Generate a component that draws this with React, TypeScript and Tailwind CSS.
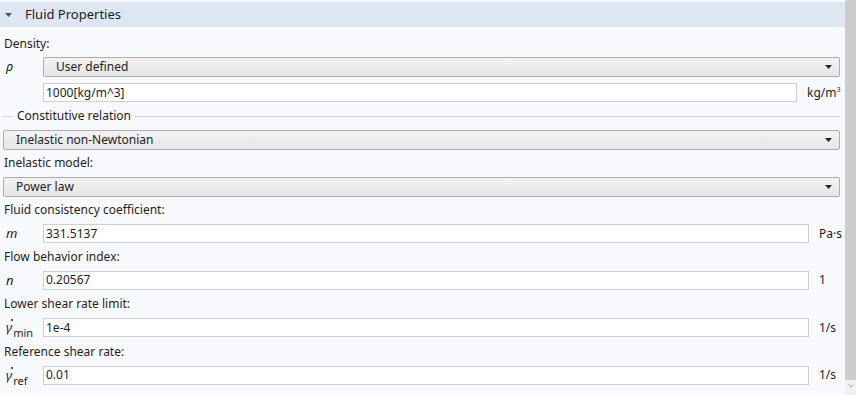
import type { ReactNode } from 'react';

const FONT = { fontFamily: '"Noto Sans", "Open Sans", sans-serif' };

function Caret({ className = '' }: { className?: string }) {
  return (
    <svg width="7" height="4" viewBox="0 0 7 4" className={className}>
      <path d="M0 0H7L3.5 4Z" fill="currentColor" />
    </svg>
  );
}

function Select({ value }: { value: string }) {
  return (
    <div className="flex h-[20px] flex-1 items-center justify-between rounded-[2px] border border-[#adadad] bg-gradient-to-b from-[#f3f3f3] to-[#e6e6e6] pl-[12px] pr-[7px]">
      <span>{value}</span>
      <Caret className="text-[#222]" />
    </div>
  );
}

function Field({ value }: { value: string }) {
  return (
    <div className="flex h-[19px] flex-1 items-center border border-[#cfcfcf] bg-white pl-[2px]">
      {value}
    </div>
  );
}

function Label({ children, className = '' }: { children: ReactNode; className?: string }) {
  return <div className={`flex h-[20px] items-center pl-[4px] ${className}`}>{children}</div>;
}

function Sym({ children }: { children: ReactNode }) {
  return <div className="w-[43px] shrink-0 pl-[6px] text-[13px] italic">{children}</div>;
}

function GammaDot({ sub }: { sub: string }) {
  return (
    <span className="inline-flex items-end">
      <span className="relative italic">
        γ
        <span className="absolute left-[5px] top-[1px] h-[2px] w-[2px] rounded-full bg-[#1e1e1e]" />
      </span>
      <span className="mb-[-4px] ml-[1px] text-[11px] not-italic">{sub}</span>
    </span>
  );
}

function UnitRow({ sym, value, unit }: { sym: ReactNode; value: string; unit: string }) {
  return (
    <div className="mt-[4px] flex items-center">
      <Sym>{sym}</Sym>
      <Field value={value} />
      <div className="w-[31px] shrink-0 pl-[10px]">{unit}</div>
    </div>
  );
}

export default function App() {
  return (
    <div className="flex h-[395px] w-[856px] overflow-hidden bg-[#f8f9fd] text-[12px] text-[#1e1e1e]" style={FONT}>
      <div className="flex min-w-0 flex-1 flex-col pt-[2px]">
        <div className="flex h-[25px] items-center bg-[#dde7f2] pl-[5px] text-[13px]">
          <Caret className="text-[#555]" />
          <span className="ml-[13px]">Fluid Properties</span>
        </div>

        <div className="flex flex-col pr-[5px]">
          <Label className="mt-[7px]">Density:</Label>
          <div className="mt-[3px] flex items-center">
            <Sym>ρ</Sym>
            <Select value="User defined" />
          </div>
          <div className="mt-[6px] flex items-center">
            <div className="w-[43px] shrink-0" />
            <Field value="1000[kg/m^3]" />
            <div className="w-[43px] shrink-0 pl-[10px]">
              kg/m<span className="relative top-[-5px] text-[7px]">3</span>
            </div>
          </div>

          <div className="mt-[4px] flex h-[20px] items-center pl-[2px]">
            <div className="h-px w-[11px] bg-[#d3d3d3]" />
            <span className="px-[4px]">Constitutive relation</span>
            <div className="h-px flex-1 bg-[#d3d3d3]" />
          </div>

          <div className="mt-[4px] flex pl-[3px]">
            <Select value="Inelastic non-Newtonian" />
          </div>
          <Label className="mt-[3px]">Inelastic model:</Label>
          <div className="mt-[4px] flex pl-[3px]">
            <Select value="Power law" />
          </div>

          <Label className="mt-[3px]">Fluid consistency coefficient:</Label>
          <UnitRow sym="m" value="331.5137" unit="Pa·s" />
          <Label className="mt-[3px]">Flow behavior index:</Label>
          <UnitRow sym="n" value="0.20567" unit="1" />
          <Label className="mt-[4px]">Lower shear rate limit:</Label>
          <UnitRow sym={<GammaDot sub="min" />} value="1e-4" unit="1/s" />
          <Label className="mt-[4px]">Reference shear rate:</Label>
          <UnitRow sym={<GammaDot sub="ref" />} value="0.01" unit="1/s" />
        </div>
      </div>

      <div className="flex w-[11px] shrink-0 flex-col">
        <div className="flex-1 bg-[#cdcdcd]" />
        <div className="flex h-[15px] items-start justify-center bg-[#f0f0f0] pt-[4px] text-[#a0a0a0]">
          <svg width="6" height="4" viewBox="0 0 6 4">
            <path d="M0.5 0.5L3 3L5.5 0.5" fill="none" stroke="currentColor" strokeWidth="1" />
          </svg>
        </div>
      </div>
    </div>
  );
}
